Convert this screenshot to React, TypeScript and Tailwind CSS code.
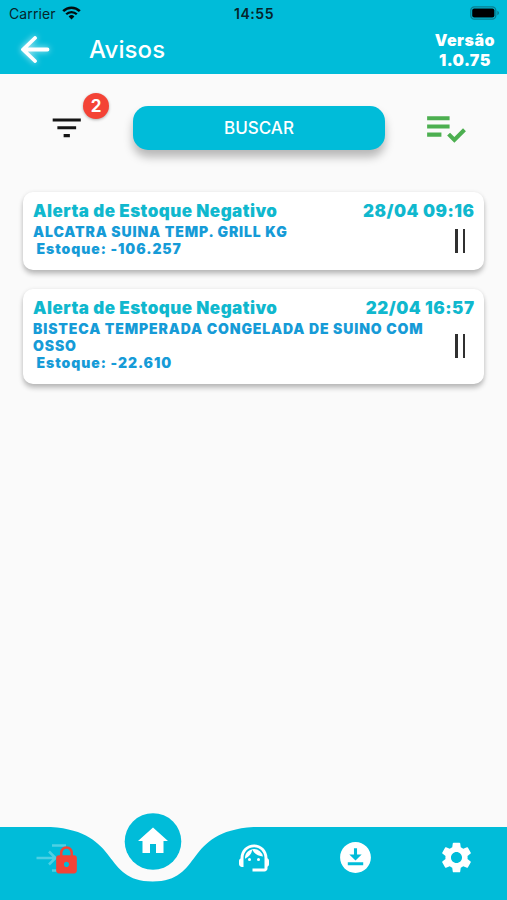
import { MdDownloadForOffline, MdFilterList, MdHome, MdLock, MdSettings, MdSupportAgent } from 'react-icons/md';

type Notice = { title: string; date: string; product: string; stock: string; height: string };

const notices: Notice[] = [
  { title: 'Alerta de Estoque Negativo', date: '28/04 09:16', product: 'ALCATRA SUINA TEMP. GRILL KG', stock: 'Estoque: -106.257', height: 'h-[78px]' },
  { title: 'Alerta de Estoque Negativo', date: '22/04 16:57', product: 'BISTECA TEMPERADA CONGELADA DE SUINO COM OSSO', stock: 'Estoque: -22.610', height: 'h-[95px]' },
];

function StatusBar() {
  return (
    <div className="grid h-[27px] grid-cols-3 items-center pl-[9px] pr-[7px] text-[14px] text-[#06252b]">
      <div className="flex items-center gap-[6px]">
        <span className="tracking-[0.1px]">Carrier</span>
        <svg className="-mt-[2px]" width="19" height="14" viewBox="0 0 19 14" fill="none" stroke="#020d0f">
          <path d="M1.2 5.2a11.8 11.8 0 0 1 16.6 0" strokeWidth="2.6" />
          <path d="M4.2 8.3a7.5 7.5 0 0 1 10.6 0" strokeWidth="2.3" />
          <path d="M9.5 13.5 6.6 10.5a4.1 4.1 0 0 1 5.8 0Z" fill="#020d0f" stroke="none" />
        </svg>
      </div>
      <span className="-ml-[1px] text-center font-semibold tracking-[0.55px]">14:55</span>
      <svg className="-mt-[1px] justify-self-end" width="30" height="14" viewBox="0 0 30 14">
        <rect x="0.8" y="0.8" width="25" height="12.4" rx="3.6" fill="none" stroke="#087f90" strokeWidth="1.3" />
        <rect x="2.2" y="2.5" width="22.2" height="9" rx="2" fill="#000" />
        <path d="M27.3 4.8c2.3.8 2.3 3.6 0 4.4Z" fill="#087f90" />
      </svg>
    </div>
  );
}

function Header() {
  return (
    <header className="h-[74px] shrink-0 bg-[#00bcd9] text-white">
      <StatusBar />
      <div className="flex h-[47px] items-center pl-[19px] pr-[12px]">
        <svg className="-mt-[2px] drop-shadow-[0_0_3px_rgba(255,255,255,0.75)]" width="32" height="32" viewBox="0 0 32 32" fill="none" stroke="white" strokeWidth="3.8" strokeLinecap="round" strokeLinejoin="round">
          <path d="M16 4 4 15.5 16 27M4.5 15.5H28.5" />
        </svg>
        <h1 className="-mt-[1px] ml-[38px] text-[24px] font-medium leading-[30px] tracking-[0.1px]">Avisos</h1>
        <p className="ml-auto -mt-[2px] text-center text-[16px] font-black leading-[20px] tracking-[0.5px]">Versão<br />1.0.75</p>
      </div>
    </header>
  );
}

function Toolbar() {
  return (
    <div className="flex h-[76px] items-end">
      <div className="relative ml-[48px] h-[41px] w-[38px]">
        <MdFilterList size={37.5} color="#151515" />
        <span className="absolute -top-[16px] left-[35px] flex h-[26px] w-[26px] items-center justify-center rounded-full bg-[#f44336] pt-[1px] text-[17px] font-bold text-white shadow-[0_1px_3px_rgba(0,0,0,0.3)]">2</span>
      </div>
      <button className="ml-[47px] h-[44px] w-[252px] rounded-[15px] bg-[#00bcd9] pt-[2px] text-[17px] font-medium text-white shadow-[0_7px_10px_rgba(0,0,0,0.27)]">BUSCAR</button>
      <svg className="-mb-[2.5px] ml-[36px]" width="49" height="49" viewBox="0 0 24 24" fill="#4caf50">
        <path d="M3 10h11v2H3zM3 6h11v2H3zM3 14h7v2H3zM20.59 11.93l-4.25 4.24-2.12-2.12-1.41 1.41L16.34 19 22 13.34z" />
      </svg>
    </div>
  );
}

function NoticeCard({ notice }: { notice: Notice }) {
  return (
    <article className={`${notice.height} flex flex-col rounded-[10px] bg-white px-[10px] pt-[9px] shadow-[0_4px_5px_rgba(0,0,0,0.24),0_0_4px_rgba(0,0,0,0.07)]`}>
      <div className="flex justify-between text-[17px] font-black leading-[21px] text-[#10b8ce]">
        <h2 className="tracking-[0.46px]">{notice.title}</h2>
        <time className="-mr-[0.5px] tracking-[0.5px]">{notice.date}</time>
      </div>
      <div className="flex items-start justify-between text-[14px] font-black leading-[17px] text-[#169bd7]">
        <div className="w-[400px] pt-[1px]">
          <p className="tracking-[0.87px]">{notice.product}</p>
          <p className="pl-[3.5px] tracking-[0.93px]">{notice.stock}</p>
        </div>
        <div className="flex h-full items-center gap-[5px] self-center pr-[9px] pt-[2px]">
          <i className="h-[24px] w-[2.5px] bg-[#303030]" />
          <i className="h-[24px] w-[2.5px] bg-[#303030]" />
        </div>
      </div>
    </article>
  );
}

function BottomNav() {
  return (
    <nav className="relative h-[87px] shrink-0 text-white">
      <svg className="absolute inset-0" width="507" height="87" viewBox="0 0 507 87">
        <path d="M0 14H50.7C121.7 18.5 101.4 68.5 152.7 68.5C204 68.5 182.5 18.5 253.5 14H507V87H0Z" fill="#00bcd9" />
        <circle cx="153" cy="28.5" r="28.3" fill="#00bcd9" />
      </svg>
      <div className="relative grid h-full grid-cols-5 justify-items-center">
        <div className="relative ml-[3px] mt-[27px] h-[36px] w-[44px]">
          <svg width="44" height="36" viewBox="0 0 44 36" fill="none" stroke="white" strokeOpacity="0.3" strokeWidth="2.5">
            <path d="M22 5.5H36M22 30.5H32M6.5 18H25M19 11.5 25.5 18 19 24.5" />
          </svg>
          <MdLock className="absolute left-[21px] top-[5px]" size={31} color="#f44336" />
        </div>
        <MdHome className="ml-[2px] mt-[10px]" size={36} />
        <MdSupportAgent className="ml-[1px] mt-[27px]" size={36} />
        <MdDownloadForOffline className="ml-[1px] mt-[26px]" size={37} />
        <MdSettings className="mt-[26px]" size={37} />
      </div>
    </nav>
  );
}

export default function App() {
  return (
    <div className="flex h-[900px] w-[507px] flex-col overflow-hidden bg-[#fafafa] font-['Inter',sans-serif]">
      <Header />
      <main className="flex-1">
        <Toolbar />
        <section className="mt-[42px] flex flex-col gap-[19px] px-[23px]">
          {notices.map((notice) => <NoticeCard key={notice.date} notice={notice} />)}
        </section>
      </main>
      <BottomNav />
    </div>
  );
}
